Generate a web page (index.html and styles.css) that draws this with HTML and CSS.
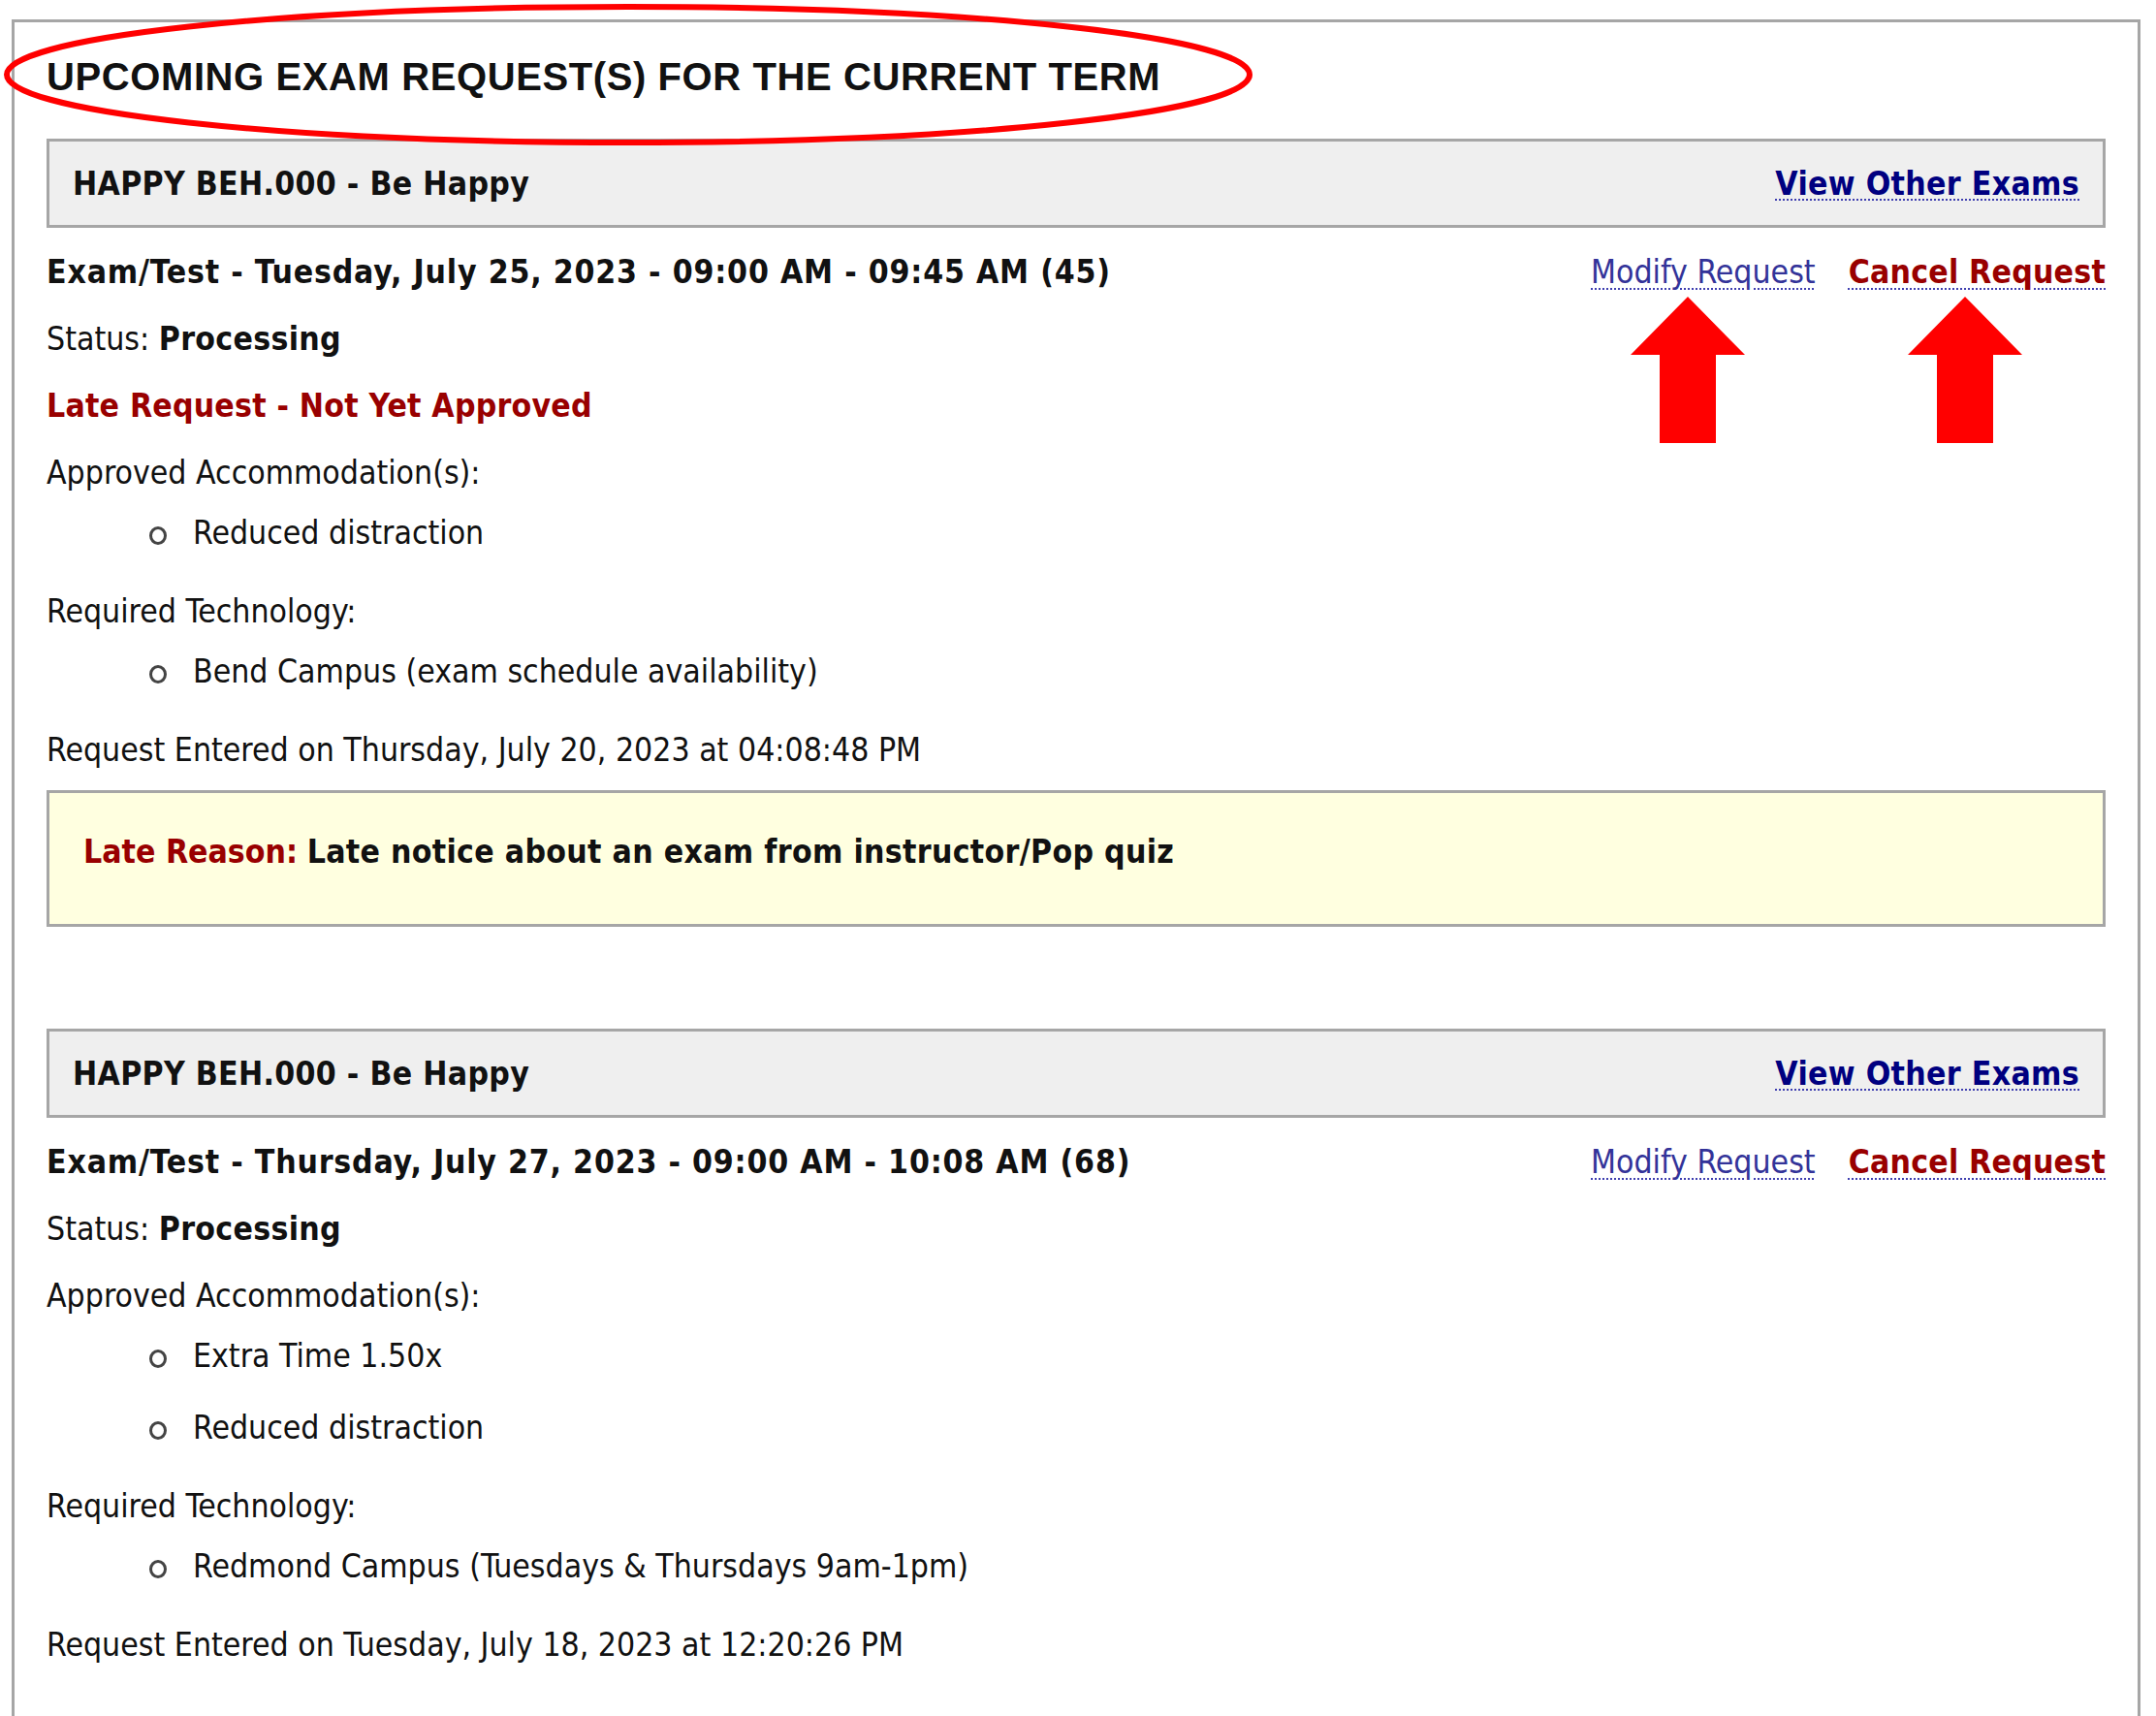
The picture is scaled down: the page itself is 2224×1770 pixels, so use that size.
FILE: index.html
```html
<!DOCTYPE html>
<html lang="en">

<head>
    <meta charset="UTF-8">
    <meta name="viewport" content="width=device-width, initial-scale=1.0">
    <title>Upcoming Exam Requests</title>
    <link rel="stylesheet" href="styles.css">
</head>

<body>
    <div class="panel">
        <div class="panel-title">
            <h2>UPCOMING EXAM REQUEST(S) FOR THE CURRENT TERM</h2>
            <!-- red ring drawn round the heading -->
            <svg class="title-ring" width="1292" height="148" viewBox="0 0 1292 148">
                <ellipse cx="646" cy="74" rx="641" ry="70" fill="none" stroke="#ff0000" stroke-width="6"/>
            </svg>
        </div>

        <div class="exam">
            <div class="course-bar">
                <span class="course-name">HAPPY BEH.000 - Be Happy</span>
                <a href="#" class="other-exams">View Other Exams</a>
            </div>

            <div class="exam-head">
                <span class="exam-when">Exam/Test - Tuesday, July 25, 2023 - 09:00 AM - 09:45 AM (45)</span>
                <span class="actions">
                    <a href="#" class="modify">Modify Request</a>
                    <a href="#" class="cancel">Cancel Request</a>
                    <svg class="pointer pointer-modify" width="118" height="151" viewBox="0 0 118 151">
                        <path d="M59 0 L118 60 L88 60 L88 151 L30 151 L30 60 L0 60 Z" fill="#ff0000"/>
                    </svg>
                    <svg class="pointer pointer-cancel" width="118" height="151" viewBox="0 0 118 151">
                        <path d="M59 0 L118 60 L88 60 L88 151 L30 151 L30 60 L0 60 Z" fill="#ff0000"/>
                    </svg>
                </span>
            </div>

            <div class="line">Status: <b>Processing</b></div>
            <div class="line late-flag">Late Request - Not Yet Approved</div>
            <div class="line">Approved Accommodation(s):</div>
            <ul class="items">
                <li>Reduced distraction</li>
            </ul>
            <div class="line">Required Technology:</div>
            <ul class="items">
                <li>Bend Campus (exam schedule availability)</li>
            </ul>
            <div class="line">Request Entered on Thursday, July 20, 2023 at 04:08:48 PM</div>

            <div class="late-reason">
                <span class="late-label">Late Reason:</span> <b>Late notice about an exam from instructor/Pop quiz</b>
            </div>
        </div>

        <div class="exam">
            <div class="course-bar">
                <span class="course-name">HAPPY BEH.000 - Be Happy</span>
                <a href="#" class="other-exams">View Other Exams</a>
            </div>

            <div class="exam-head">
                <span class="exam-when">Exam/Test - Thursday, July 27, 2023 - 09:00 AM - 10:08 AM (68)</span>
                <span class="actions">
                    <a href="#" class="modify">Modify Request</a>
                    <a href="#" class="cancel">Cancel Request</a>
                </span>
            </div>

            <div class="line">Status: <b>Processing</b></div>
            <div class="line">Approved Accommodation(s):</div>
            <ul class="items">
                <li>Extra Time 1.50x</li>
                <li>Reduced distraction</li>
            </ul>
            <div class="line">Required Technology:</div>
            <ul class="items">
                <li>Redmond Campus (Tuesdays &amp; Thursdays 9am-1pm)</li>
            </ul>
            <div class="line">Request Entered on Tuesday, July 18, 2023 at 12:20:26 PM</div>
        </div>
    </div>
</body>
</html>
```

FILE: styles.css
```css
:root {
    --text-color: #111111;
    --border-gray: #a6a6a6;
    --bar-gray: #efefef;
    --note-yellow: #ffffe0;
    --dark-red: #990000;
    --navy: #000080;
    --link-blue: #333399;
}

* {
    box-sizing: border-box;
    margin: 0;
    padding: 0;
}

body {
    font-family: "DejaVu Sans Condensed", "DejaVu Sans", sans-serif;
    font-stretch: semi-condensed;
    font-size: 33.5px;
    color: var(--text-color);
    background-color: white;
    overflow: hidden;
}

b {
    letter-spacing: 0.3px;
}

.panel {
    margin: 20px 16px 0 12px;
    padding: 0 33px 200px 33px;
    border: 3px solid var(--border-gray);
    border-bottom: none;
    min-height: 1900px;
}

.panel-title {
    position: relative;
    padding-top: 32px;
}

.panel-title h2 {
    font-family: "Liberation Sans", Arial, sans-serif;
    font-stretch: normal;
    font-size: 40px;
    line-height: 48px;
    font-weight: 700;
    letter-spacing: 0.6px;
    color: #111;
}

.title-ring {
    position: absolute;
    left: -46px;
    top: -20px;
    pointer-events: none;
}

.exam {
    margin-top: 40px;
}

.exam + .exam {
    margin-top: 105px;
}

.course-bar {
    display: flex;
    justify-content: space-between;
    align-items: center;
    height: 92px;
    padding: 0 24px;
    background-color: var(--bar-gray);
    border: 3px solid var(--border-gray);
    font-weight: 700;
    letter-spacing: 0.3px;
}

a {
    text-decoration: underline dotted;
    text-decoration-color: #3f3fb0;
    text-decoration-thickness: 2px;
    text-underline-offset: 5px;
}

.other-exams {
    color: var(--navy);
}

.exam-head {
    display: flex;
    justify-content: space-between;
    margin-top: 26px;
    line-height: 40px;
}

.exam-when {
    font-weight: 700;
    letter-spacing: 0.8px;
}

.actions {
    position: relative;
    display: flex;
    gap: 34px;
}

.modify {
    color: var(--link-blue);
}

.cancel {
    color: var(--dark-red);
    font-weight: 700;
    letter-spacing: 0.2px;
}

.pointer {
    position: absolute;
    top: 45px;
}

.pointer-modify {
    left: 41px;
}

.pointer-cancel {
    left: 327px;
}

.line {
    line-height: 40px;
    margin-top: 29px;
}

.late-flag {
    color: var(--dark-red);
    font-weight: 700;
    letter-spacing: 0.2px;
}

.items {
    list-style: none;
    padding-left: 151px;
    margin-top: 22px;
}

.items li {
    position: relative;
    line-height: 40px;
}

/* hollow ring bullet */
.items li::before {
    content: "";
    position: absolute;
    left: -45px;
    top: 13px;
    width: 12px;
    height: 13px;
    border: 3px solid #444;
    border-radius: 50%;
}

.items li + li {
    margin-top: 34px;
}

.items + .line {
    margin-top: 41px;
}

.late-reason {
    margin-top: 21px;
    height: 141px;
    padding: 41px 24px 0 35px;
    line-height: 40px;
    background-color: var(--note-yellow);
    border: 3px solid var(--border-gray);
}

.late-label {
    color: var(--dark-red);
    font-weight: 700;
}
```
